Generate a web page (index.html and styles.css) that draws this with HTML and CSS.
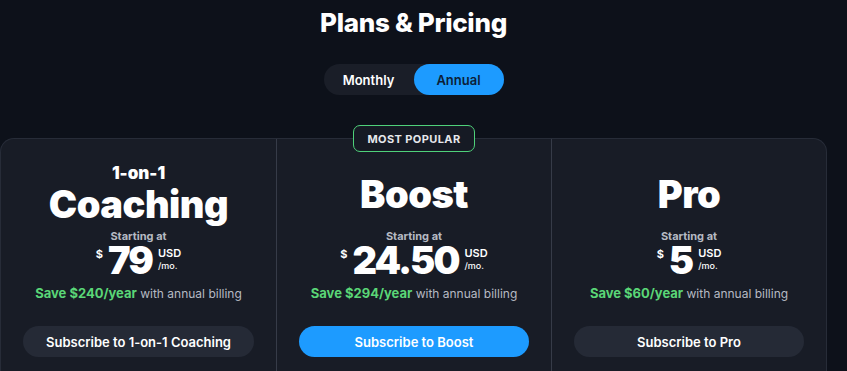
FILE: index.html
```html
<!DOCTYPE html>
<html lang="en">
<head>
<meta charset="utf-8">
<title>Plans &amp; Pricing</title>
<link rel="stylesheet" href="styles.css">
</head>
<body>
<main class="page">
  <h1 class="title">Plans &amp; Pricing</h1>
  <div class="toggle">
    <button class="toggle-btn">Monthly</button>
    <button class="toggle-btn active">Annual</button>
  </div>
  <section class="plans">
    <article class="plan">
      <div class="plan-name">
        <span class="plan-pre">1-on-1</span>
        <span class="plan-title">Coaching</span>
      </div>
      <div class="starting">Starting at</div>
      <div class="price">
        <span class="cur">$</span>
        <span class="amount">79</span>
        <span class="unit"><span class="usd">USD</span><span class="per">/mo.</span></span>
      </div>
      <p class="save"><strong>Save $240/year</strong> with annual billing</p>
      <button class="sub">Subscribe to 1-on-1 Coaching</button>
    </article>
    <article class="plan featured">
      <div class="badge">MOST POPULAR</div>
      <div class="plan-name">
        <span class="plan-title">Boost</span>
      </div>
      <div class="starting">Starting at</div>
      <div class="price">
        <span class="cur">$</span>
        <span class="amount">24.50</span>
        <span class="unit"><span class="usd">USD</span><span class="per">/mo.</span></span>
      </div>
      <p class="save"><strong>Save $294/year</strong> with annual billing</p>
      <button class="sub primary">Subscribe to Boost</button>
    </article>
    <article class="plan">
      <div class="plan-name">
        <span class="plan-title">Pro</span>
      </div>
      <div class="starting">Starting at</div>
      <div class="price">
        <span class="cur">$</span>
        <span class="amount">5</span>
        <span class="unit"><span class="usd">USD</span><span class="per">/mo.</span></span>
      </div>
      <p class="save"><strong>Save $60/year</strong> with annual billing</p>
      <button class="sub">Subscribe to Pro</button>
    </article>
  </section>
</main>
</body>
</html>
```
FILE: styles.css
```css
* { box-sizing: border-box; }
html, body {
  margin: 0;
  background: #0d111a;
  height: 100%;
  overflow: hidden;
}
body {
  font-family: Inter, "Noto Sans", sans-serif;
  color: #fff;
}
.page {
  width: 827px;
  display: flex;
  flex-direction: column;
  align-items: center;
}
.title {
  margin: 8px 0 0;
  font-size: 26px;
  line-height: 30px;
  font-weight: 800;
  letter-spacing: -0.3px;
}
.toggle {
  margin-top: 26px;
  display: flex;
  background: #1a1e28;
  border-radius: 16px;
  height: 31px;
  width: 180px;
}
.toggle-btn {
  flex: 1;
  border: 0;
  border-radius: 16px;
  background: transparent;
  color: #fff;
  font-family: inherit;
  font-size: 13px;
  font-weight: 600;
  padding: 0;
}
.toggle-btn.active {
  background: #1d9bff;
  color: #0c1e38;
}
.plans {
  margin-top: 43px;
  width: 827px;
  display: grid;
  grid-template-columns: 1fr 1fr 1fr;
  background: #181c26;
  border: 1px solid #272c38;
  border-bottom: 0;
  border-radius: 14px 14px 0 0;
  height: 260px;
}
.plan {
  position: relative;
  display: flex;
  flex-direction: column;
  align-items: center;
  padding: 20px 22px 0;
}
.plan + .plan { border-left: 1px solid #363b48; }
.badge {
  position: absolute;
  top: -14px;
  left: 50%;
  transform: translateX(-50%);
  width: 122px;
  height: 27px;
  border: 1px solid #4fd17a;
  border-radius: 7px;
  background: #161a24;
  color: #e6e8ec;
  font-size: 11px;
  font-weight: 700;
  letter-spacing: 0.4px;
  display: flex;
  align-items: center;
  justify-content: center;
}
.plan-name {
  height: 70px;
  display: flex;
  flex-direction: column;
  align-items: center;
  justify-content: center;
}
.plan-pre {
  font-size: 17px;
  line-height: 20px;
  font-weight: 900;
}
.plan-title {
  font-size: 38px;
  line-height: 42px;
  font-weight: 900;
  letter-spacing: -0.5px;
}
.starting {
  margin-top: 0;
  font-size: 11px;
  line-height: 14px;
  font-weight: 700;
  color: #b6bac3;
}
.price {
  display: flex;
  align-items: flex-start;
  height: 30px;
  margin-top: 2px;
}
.cur {
  font-size: 11px;
  line-height: 13px;
  font-weight: 700;
  margin-top: 3px;
  margin-right: 5px;
}
.amount {
  font-size: 38px;
  line-height: 30px;
  font-weight: 900;
  letter-spacing: -2px;
}
.unit {
  display: flex;
  flex-direction: column;
  margin-left: 6px;
  margin-top: 2px;
}
.usd {
  font-size: 11px;
  line-height: 13px;
  font-weight: 600;
}
.per {
  font-size: 9px;
  line-height: 12px;
  font-weight: 500;
}
.save {
  margin: 10px 0 0;
  font-size: 12px;
  line-height: 16px;
  color: #b6bac3;
}
.save strong {
  color: #5ad677;
  font-size: 13px;
  font-weight: 700;
}
.sub {
  margin-top: 24px;
  width: 100%;
  height: 31px;
  border: 0;
  border-radius: 16px;
  background: #252a36;
  color: #fff;
  font-family: inherit;
  font-size: 13px;
  font-weight: 600;
}
.sub.primary {
  background: #1d9bff;
}
```
